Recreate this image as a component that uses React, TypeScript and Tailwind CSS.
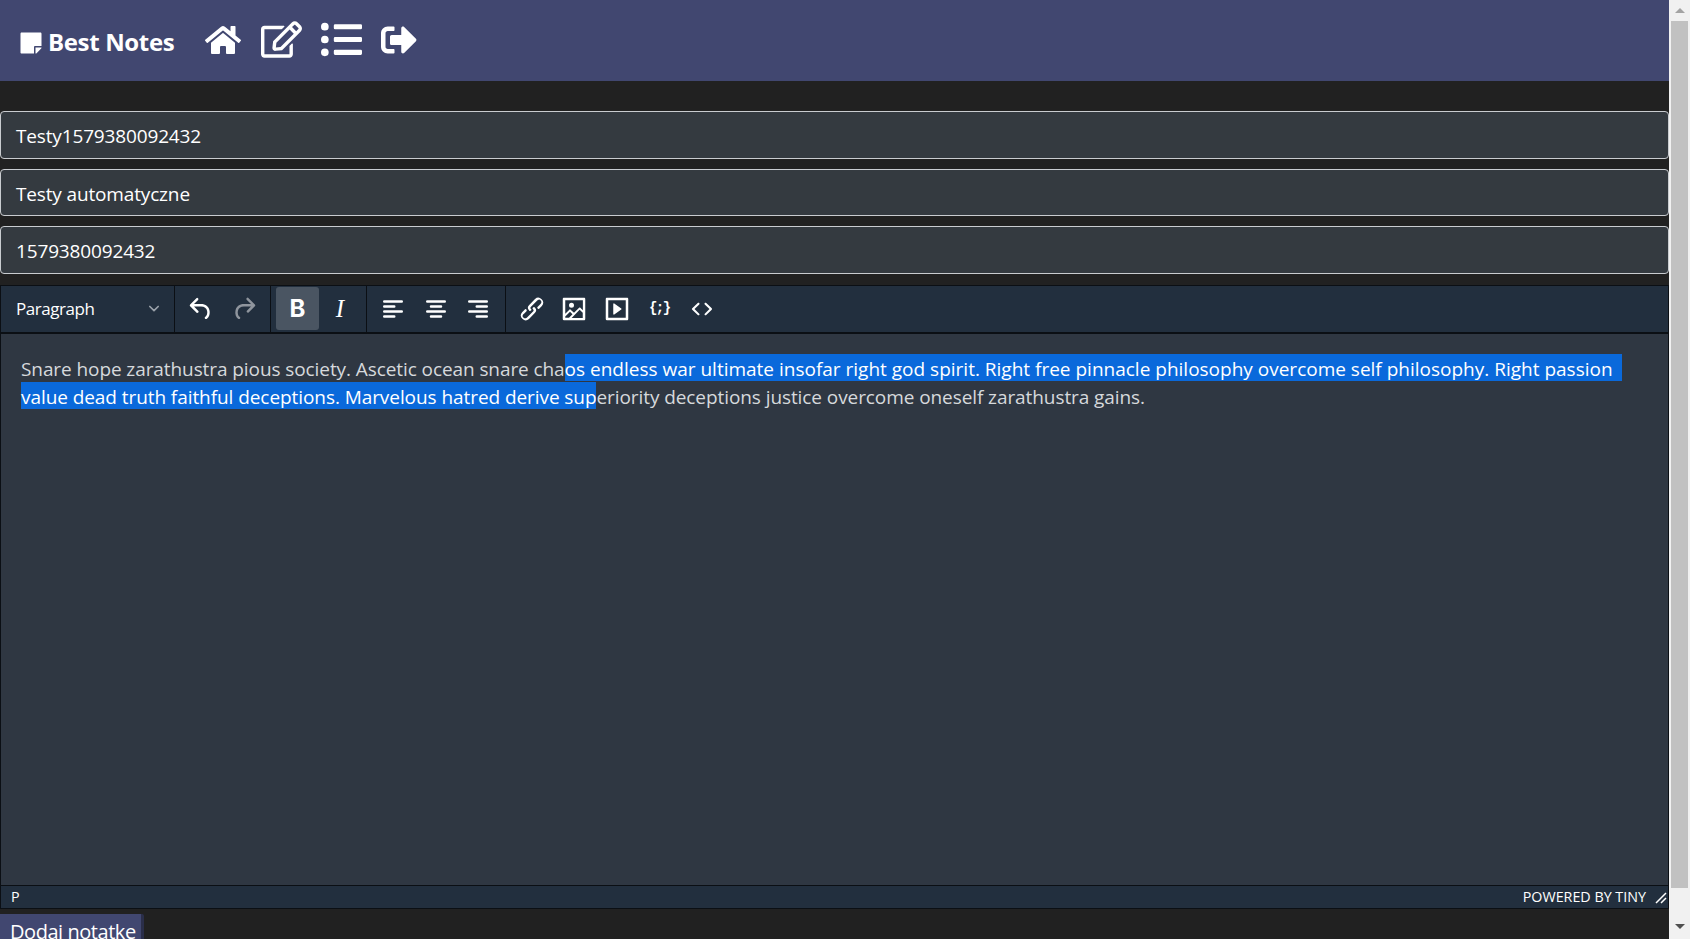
import React from "react";
import { FaStickyNote, FaHome, FaRegEdit, FaListUl, FaSignOutAlt } from "react-icons/fa";

const font = { fontFamily: '"Open Sans", "Noto Sans", sans-serif' };

function Tiny({ d }: { d: string }) {
  return (
    <svg viewBox="0 0 24 24" width="30" height="30" fill="currentColor">
      <path d={d} />
    </svg>
  );
}

const icons = {
  undo: "M6.4 8H12c3.7 0 6.2 2 6.8 5.1.6 2.7-.4 5.6-2.3 6.8a1 1 0 0 1-1-1.8c1.1-.6 1.8-2.7 1.4-4.6-.5-2.1-2.1-3.5-4.9-3.5H6.4l3.3 3.3a1 1 0 1 1-1.4 1.4l-5-5a1 1 0 0 1 0-1.4l5-5a1 1 0 0 1 1.4 1.4L6.4 8z",
  redo: "M17.6 10H12c-2.8 0-4.4 1.4-4.9 3.5-.4 2 .3 4 1.4 4.6a1 1 0 1 1-1 1.8c-2-1.2-2.9-4.1-2.3-6.8.6-3 3-5.1 6.8-5.1h5.6l-3.3-3.3a1 1 0 1 1 1.4-1.4l5 5a1 1 0 0 1 0 1.4l-5 5a1 1 0 0 1-1.4-1.4l3.3-3.3z",
  left: "M5 5h14a1 1 0 0 1 0 2H5a1 1 0 1 1 0-2zm0 4h8a1 1 0 0 1 0 2H5a1 1 0 1 1 0-2zm0 8h8a1 1 0 0 1 0 2H5a1 1 0 0 1 0-2zm0-4h14a1 1 0 0 1 0 2H5a1 1 0 0 1 0-2z",
  center: "M5 5h14a1 1 0 0 1 0 2H5a1 1 0 1 1 0-2zm3 4h8a1 1 0 0 1 0 2H8a1 1 0 1 1 0-2zm0 8h8a1 1 0 0 1 0 2H8a1 1 0 0 1 0-2zm-3-4h14a1 1 0 0 1 0 2H5a1 1 0 0 1 0-2z",
  right: "M5 5h14a1 1 0 0 1 0 2H5a1 1 0 1 1 0-2zm6 4h8a1 1 0 0 1 0 2h-8a1 1 0 0 1 0-2zm0 8h8a1 1 0 0 1 0 2h-8a1 1 0 0 1 0-2zm-6-4h14a1 1 0 0 1 0 2H5a1 1 0 0 1 0-2z",
  link: "M6.2 12.3a1 1 0 0 1 1.4 1.4l-2 2a2 2 0 1 0 2.6 2.8l4.8-4.8a1 1 0 0 0 0-1.4 1 1 0 1 1 1.4-1.3 2.9 2.9 0 0 1 0 4L9.6 20a3.9 3.9 0 0 1-5.5-5.5l2-2zm11.6-.6a1 1 0 0 1-1.4-1.4l2-2a2 2 0 1 0-2.6-2.8L11 10.3a1 1 0 0 0 0 1.4 1 1 0 1 1-1.4 1.3 2.9 2.9 0 0 1 0-4L14.4 4a3.9 3.9 0 0 1 5.5 5.5l-2 2z",
  image: "M5 15.7l3.3-3.2c.3-.3.7-.3 1 0L12 15l4.1-4c.3-.4.8-.4 1 0l2 1.9V5H5v10.7zM5 18V19h3l2.8-2.9-2-2L5 17.9zm14-3l-2.5-2.4-6.4 6.5H19v-4zM4 3h16c.6 0 1 .4 1 1v16c0 .6-.4 1-1 1H4a1 1 0 0 1-1-1V4c0-.6.4-1 1-1zm6 8a2 2 0 1 0 0-4 2 2 0 0 0 0 4z",
  media: "M4 3h16c.6 0 1 .4 1 1v16c0 .6-.4 1-1 1H4a1 1 0 0 1-1-1V4c0-.6.4-1 1-1zm1 2v14h14V5H5zm4.8 2.6l5.6 4a.5.5 0 0 1 0 .8l-5.6 4A.5.5 0 0 1 9 16V8a.5.5 0 0 1 .8-.4z",
  code: "M9.8 15.7c.3.3.3.8 0 1-.3.4-.9.4-1.2 0l-4.4-4.1a.8.8 0 0 1 0-1.2l4.4-4.2c.3-.3.9-.3 1.2 0 .3.3.3.8 0 1.1L6 12l3.8 3.7zm4.4 0l3.8-3.7-3.8-3.7a.8.8 0 0 1 0-1.1c.3-.3.9-.3 1.2 0l4.4 4.2c.3.3.3.9 0 1.2l-4.4 4.1c-.3.4-.9.4-1.2 0a.8.8 0 0 1 0-1z",
  chev: "M7 9l5 5 5-5",
};

function Btn({ d, dim = false }: { d: string; dim?: boolean }) {
  return (
    <div className={`h-[42px] w-[42.5px] flex items-center justify-center ${dim ? "text-[#8f959d]" : "text-white"}`}>
      <Tiny d={d} />
    </div>
  );
}

function Group({ children, last = false }: { children: React.ReactNode; last?: boolean }) {
  return (
    <div className={`flex items-center h-full px-[5px] ${last ? "" : "border-r border-[#0b0f14]"}`}>{children}</div>
  );
}

function Field({ value }: { value: string }) {
  return (
    <div className="h-[47.5px] rounded-[4px] border border-[#c9ccd0] bg-[#343a40] text-white text-[19px] leading-[49px] pl-[15px] tracking-[-0.15px]">
      {value}
    </div>
  );
}

export default function App() {
  return (
    <div className="flex h-[939px] w-full overflow-hidden bg-[#212121]" style={font}>
      <div className="flex-1 min-w-0 flex flex-col">
        <header className="h-[81px] shrink-0 bg-[#414770] flex items-center text-white">
          <div className="flex items-center pl-[19px] w-[205px] mt-[2px]">
            <FaStickyNote size={24} className="shrink-0 mt-[2px]" />
            <span className="font-bold text-[24px] ml-[5px] tracking-[-0.35px] leading-none">Best Notes</span>
          </div>
          <div className="flex items-center -mt-[2px]">
            <FaHome size={36} />
            <FaRegEdit size={41} className="ml-[20px]" />
            <FaListUl size={41} className="ml-[19px]" />
            <FaSignOutAlt size={36} className="ml-[19px]" />
          </div>
        </header>

        <div className="mt-[30px] flex flex-col gap-[10px]">
          <Field value="Testy1579380092432" />
          <Field value="Testy automatyczne" />
          <Field value="1579380092432" />
        </div>

        <div className="mt-[11px] h-[624px] shrink-0 flex flex-col border border-[#0b0f14] bg-[#2f3742]">
          <div className="h-[48px] shrink-0 bg-[#222f3e] border-b-2 border-[#0b0f14] flex items-center text-white">
            <div className="flex items-center h-full w-[174px] border-r border-[#0b0f14] pl-[15px] pr-[10px] justify-between text-[17px] tracking-[-0.45px]">
              <span>Paragraph</span>
              <svg viewBox="0 0 24 24" width="20" height="20" fill="none" stroke="#9aa1a9" strokeWidth="2" strokeLinecap="round" strokeLinejoin="round">
                <path d={icons.chev} />
              </svg>
            </div>
            <Group>
              <Btn d={icons.undo} />
              <Btn d={icons.redo} dim />
            </Group>
            <Group>
              <div className="h-[43px] w-[43px] rounded-[3px] bg-[#4a5562] flex items-center justify-center text-[24px] font-bold leading-none" style={{ fontFamily: '"Inter", sans-serif' }}>
                B
              </div>
              <div className="h-[42px] w-[42px] flex items-center justify-center text-[25px] italic leading-none" style={{ fontFamily: '"Liberation Serif", serif' }}>
                I
              </div>
            </Group>
            <Group>
              <Btn d={icons.left} />
              <Btn d={icons.center} />
              <Btn d={icons.right} />
            </Group>
            <Group last>
              <Btn d={icons.link} />
              <Btn d={icons.image} />
              <Btn d={icons.media} />
              <div className="h-[42px] w-[42.5px] flex items-center justify-center text-[14px] font-bold tracking-[-1.5px]" style={{ fontFamily: '"Liberation Mono", monospace' }}>
                {"{;}"}
              </div>
              <Btn d={icons.code} />
            </Group>
          </div>

          <div className="flex-1 pl-[20px] pt-[20px] text-[19px] leading-[31px] text-[#d6d9dc] whitespace-pre">
            <div className="h-[28px]">
              <span className="tracking-[-0.085px]">Snare hope zarathustra pious society. Ascetic ocean snare cha</span>
              <span className="inline-block h-[27.5px] bg-[#0a69db] text-white tracking-[0px]">os endless war ultimate insofar right god spirit. Right free pinnacle philosophy overcome self philosophy. Right passion  </span>
            </div>
            <div className="h-[28px]">
              <span className="inline-block h-[27.5px] bg-[#0a69db] text-white tracking-[-0.07px]">value dead truth faithful deceptions. Marvelous hatred derive sup</span>
              <span className="tracking-[-0.08px]">eriority deceptions justice overcome oneself zarathustra gains.</span>
            </div>
          </div>

          <div className="h-[23px] shrink-0 bg-[#222f3e] border-t border-[#0b0f14] flex items-center justify-between pl-[10px] pr-[1px] text-white text-[14.3px]">
            <span>P</span>
            <div className="flex items-center">
              <span>POWERED BY TINY</span>
              <svg viewBox="0 0 12 12" width="12" height="12" className="ml-[9px] mt-[3px]" stroke="#fff" strokeWidth="1.5" fill="none">
                <path d="M1 11L11 1M6 11l5-5" />
              </svg>
            </div>
          </div>
        </div>

        <div className="mt-[5.5px]">
          <div className="inline-block w-[144px] h-[40px] bg-[#414770] border-r-[3px] border-[#2a2e49] rounded-tr-[2px] text-white text-[20px] pl-[10px] leading-[36px] tracking-[-0.45px]">
            Dodaj notatke
          </div>
        </div>
      </div>

      <div className="w-[21px] shrink-0 bg-[#f1f1f1] flex flex-col items-center">
        <div className="h-[21px] w-full flex items-center justify-center">
          <div className="w-0 h-0 border-x-[5px] border-x-transparent border-b-[5px] border-b-[#a3a3a3]" />
        </div>
        <div className="w-[17px] h-[867px] bg-[#c1c1c1]" />
        <div className="mt-[36px] w-0 h-0 border-x-[5px] border-x-transparent border-t-[5px] border-t-[#505050]" />
      </div>
    </div>
  );
}
